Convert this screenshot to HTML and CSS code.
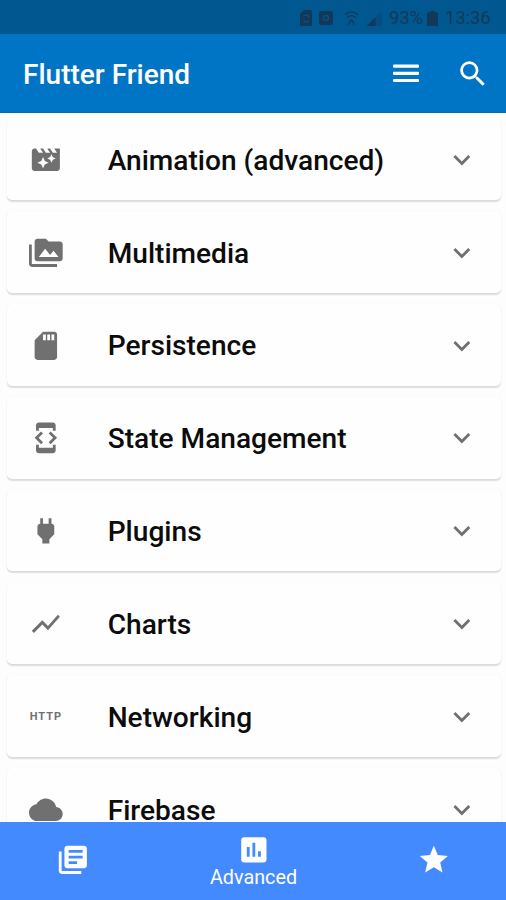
FILE: index.html
```html
<!DOCTYPE html>
<html lang="en">
<head>
<meta charset="utf-8">
<title>Flutter Friend</title>
<link rel="stylesheet" href="styles.css">
</head>
<body>
<div class="app">
  <div class="status">
    <svg class="s-sd" viewBox="0 0 12 16"><path d="M4 0h6.500q1.500 0 1.500 1.500v13q0 1.500-1.500 1.500h-9Q0 16 0 14.500V4z"/><path class="cut" d="M3.500 6.500a3 3 0 0 1 5.500 1M9 10.500a3 3 0 0 1-5.500-1"/></svg>
    <svg class="s-app" viewBox="0 0 14 14"><rect width="14" height="14" rx="2"/><circle class="cut" cx="7" cy="7" r="2.500"/></svg>
    <svg class="s-wifi" viewBox="0 0 16 16"><path class="line" d="M1 4.500q7-6 14 0M3.500 7.500q4.500-4 9 0M8 9.500L4.500 15M8 9.500l3 5.500"/></svg>
    <svg class="s-cell" viewBox="0 0 17 16"><path class="faint" d="M17 0v16H0z"/><path d="M10 7v9H1z"/></svg>
    <span class="pct">93%</span>
    <svg class="s-bat" viewBox="0 0 11 15"><path d="M3 0h5v1.500h3V15H0V1.500h3z"/></svg>
    <span class="clock">13:36</span>
  </div>
  <header class="bar">
    <h1>Flutter Friend</h1>
    <svg class="menu" viewBox="0 0 26 19"><rect y="0.500" width="26" height="3.200" rx="1"/><rect y="7.700" width="26" height="3.200" rx="1"/><rect y="14.900" width="26" height="3.200" rx="1"/></svg>
    <svg class="icon" viewBox="0 0 24 24"><path d="M15.500 14h-.79l-.28-.27A6.471 6.471 0 0 0 16 9.500 6.500 6.500 0 1 0 9.500 16c1.610 0 3.090-.59 4.230-1.570l.27.28v.79l5 4.990L20.490 19l-4.990-5zm-6 0C7.010 14 5 11.990 5 9.500S7.010 5 9.500 5 14 7.010 14 9.500 11.990 14 9.500 14z"/></svg>
  </header>
  <main class="list">
    <section class="card">
      <svg class="icon" viewBox="0 0 24 24"><path d="M18 4l2 3h-3l-2-3h-2l2 3h-3l-2-3H8l2 3H7L5 4H4c-1.100 0-1.990.9-1.990 2L2 18c0 1.100.9 2 2 2h16c1.100 0 2-.9 2-2V4h-4zm-6.750 11.250L10 18l-1.250-2.750L6 14l2.750-1.250L10 10l1.250 2.750L14 14l-2.750 1.250zm5.690-3.310L16 14l-.94-2.060L13 11l2.060-.94L16 8l.94 2.060L19 11l-2.060.94z"/></svg>
      <h2>Animation (advanced)</h2>
      <svg class="icon" viewBox="0 0 24 24"><path d="M16.590 8.590L12 13.170 7.410 8.590 6 10l6 6 6-6z"/></svg>
    </section>
    <section class="card">
      <svg class="icon" viewBox="0 0 24 24"><path d="M2 6H0v5h.01L0 20c0 1.100.9 2 2 2h18v-2H2V6zm20-2h-8l-2-2H6c-1.100 0-1.990.9-1.990 2L4 16c0 1.100.9 2 2 2h16c1.100 0 2-.9 2-2V6c0-1.100-.9-2-2-2zM7 15l4.500-6 3.500 4.510 2.500-3.010L21 15H7z"/></svg>
      <h2>Multimedia</h2>
      <svg class="icon" viewBox="0 0 24 24"><path d="M16.590 8.590L12 13.170 7.410 8.590 6 10l6 6 6-6z"/></svg>
    </section>
    <section class="card">
      <svg class="icon" viewBox="0 0 24 24"><path d="M18 2h-8L4.020 8 4 20c0 1.100.9 2 2 2h12c1.100 0 2-.9 2-2V4c0-1.100-.9-2-2-2zm-6 6h-2V4h2v4zm3 0h-2V4h2v4zm3 0h-2V4h2v4z"/></svg>
      <h2>Persistence</h2>
      <svg class="icon" viewBox="0 0 24 24"><path d="M16.590 8.590L12 13.170 7.410 8.590 6 10l6 6 6-6z"/></svg>
    </section>
    <section class="card">
      <svg class="icon" viewBox="0 0 24 24"><path d="M7 5h10v2h2V3c0-1.100-.9-1.990-2-1.990L7 1c-1.100 0-2 .9-2 2v4h2V5zm8.410 11.590L20 12l-4.590-4.590L14 8.830 17.170 12 14 15.170l1.410 1.420zM10 15.170L6.830 12 10 8.830 8.590 7.410 4 12l4.590 4.590L10 15.170zM17 19H7v-2H5v4c0 1.100.9 2 2 2h10c1.100 0 2-.9 2-2v-4h-2v2z"/></svg>
      <h2>State Management</h2>
      <svg class="icon" viewBox="0 0 24 24"><path d="M16.590 8.590L12 13.170 7.410 8.590 6 10l6 6 6-6z"/></svg>
    </section>
    <section class="card">
      <svg class="icon" viewBox="0 0 24 24"><path d="M16.010 7L16 3h-2v4h-4V3H8v4h-.01C7 6.990 6 7.990 6 8.990v5.490L9.500 18v3h5v-3l3.500-3.510v-5.500c0-1-1-2-1.990-1.990z"/></svg>
      <h2>Plugins</h2>
      <svg class="icon" viewBox="0 0 24 24"><path d="M16.590 8.590L12 13.170 7.410 8.590 6 10l6 6 6-6z"/></svg>
    </section>
    <section class="card">
      <svg class="icon" viewBox="0 0 24 24"><path d="M3.500 18.490l6-6.010 4 4L22 6.920l-1.410-1.410-7.090 7.970-4-4L2 16.990z"/></svg>
      <h2>Charts</h2>
      <svg class="icon" viewBox="0 0 24 24"><path d="M16.590 8.590L12 13.170 7.410 8.590 6 10l6 6 6-6z"/></svg>
    </section>
    <section class="card">
      <span class="http">HTTP</span>
      <h2>Networking</h2>
      <svg class="icon" viewBox="0 0 24 24"><path d="M16.590 8.590L12 13.170 7.410 8.590 6 10l6 6 6-6z"/></svg>
    </section>
    <section class="card">
      <svg class="icon" viewBox="0 0 24 24"><path d="M19.350 10.040C18.670 6.590 15.640 4 12 4 9.110 4 6.600 5.640 5.350 8.040 2.340 8.360 0 10.910 0 14c0 3.310 2.690 6 6 6h13c2.760 0 5-2.240 5-5 0-2.640-2.050-4.780-4.650-4.960z"/></svg>
      <h2>Firebase</h2>
      <svg class="icon" viewBox="0 0 24 24"><path d="M16.590 8.590L12 13.170 7.410 8.590 6 10l6 6 6-6z"/></svg>
    </section>
  </main>
  <nav class="tabs">
    <div class="tab"><svg class="icon" viewBox="0 0 24 24"><path d="M4 6H2v14c0 1.100.9 2 2 2h14v-2H4V6zm16-4H8c-1.100 0-2 .9-2 2v12c0 1.100.9 2 2 2h12c1.100 0 2-.9 2-2V4c0-1.100-.9-2-2-2zm-1 9H9V9h10v2zm-4 4H9v-2h6v2zm4-8H9V5h10v2z"/></svg></div>
    <div class="tab active"><svg class="icon" viewBox="0 0 24 24"><path d="M19 3H5c-1.100 0-2 .9-2 2v14c0 1.100.9 2 2 2h14c1.100 0 2-.9 2-2V5c0-1.100-.9-2-2-2zM9 17H7v-7h2v7zm4 0h-2V7h2v10zm4 0h-2v-4h2v4z"/></svg><span>Advanced</span></div>
    <div class="tab"><svg class="icon" viewBox="0 0 24 24"><path d="M12 17.270L18.180 21l-1.640-7.030L22 9.240l-7.190-.61L12 2 9.190 8.630 2 9.240l5.460 4.730L5.820 21z"/></svg></div>
  </nav>
</div>
</body>
</html>
```
FILE: styles.css
```css
* { box-sizing: border-box; }
body { margin: 0; font-family: Roboto, sans-serif; }
svg { display: block; flex: none; fill: currentColor; }
h1, h2 { margin: 0; font-weight: 500; white-space: nowrap; }
.icon { width: 33.7px; height: 33.7px; }
.app { width: 506px; height: 900px; display: flex; flex-direction: column; overflow: hidden; background: #fdfdfd; }

.status { flex: none; height: 34px; background: #01578f; color: #123a58; display: flex; align-items: center; padding: 2px 14px 0 300px; }
.status .cut { fill: none; stroke: #01578f; stroke-width: 1.1; }
.status .line { fill: none; stroke: currentColor; stroke-width: 1.4; }
.status .faint { opacity: .3; }
.s-sd { width: 12px; height: 16px; }
.s-app { width: 14px; height: 14px; margin-left: 7px; }
.s-wifi { width: 15px; height: 16px; margin-left: 11px; }
.s-cell { width: 16px; height: 15px; margin-left: 7px; }
.s-bat { width: 11px; height: 15px; margin-left: 3px; }
.pct, .clock { font-size: 18.500px; line-height: 20px; white-space: nowrap; }
.pct { width: 35px; margin-left: 7px; letter-spacing: -.1px; }
.clock { margin-left: 7px; letter-spacing: -.1px; }

.bar { flex: none; height: 79px; background: #0175c5; color: #fff; display: flex; align-items: center; padding: 1px 16.500px 0 23px; border-bottom: 1px solid #0a68ab; }
.bar h1 { flex: 1; font-size: 28px; line-height: 36px; padding-top: 2px; }
.menu { width: 26px; height: 19px; margin-right: 36.500px; }

.list { flex: 1; min-height: 0; overflow: hidden; padding: 5.4px 5px 0 6.500px; display: flex; flex-direction: column; gap: 11.250px; }
.card { flex: none; height: 81.600px; display: flex; align-items: center; padding: 1px 22.500px 0; background: #fefefe; border-radius: 5px; box-shadow: 0 1.400px 1.400px rgba(0,0,0,.13), 0 0 2px rgba(0,0,0,.04); color: #707070; }
.card h2 { flex: 1; margin-left: 45px; padding-top: 2px; font-size: 28.100px; line-height: 36px; color: #0c0c0c; }
.http { width: 33.700px; font-size: 11px; font-weight: 700; letter-spacing: 1px; text-align: center; }

.tabs { flex: none; height: 78px; background: #448aff; color: #fff; display: grid; grid-template-columns: 145px 217px 144px; }
.tab { display: flex; flex-direction: column; align-items: center; justify-content: center; padding-bottom: 2px; }
.active { justify-content: flex-start; padding-top: 11px; }
.active span { font-size: 19.800px; line-height: 22px; }
```
